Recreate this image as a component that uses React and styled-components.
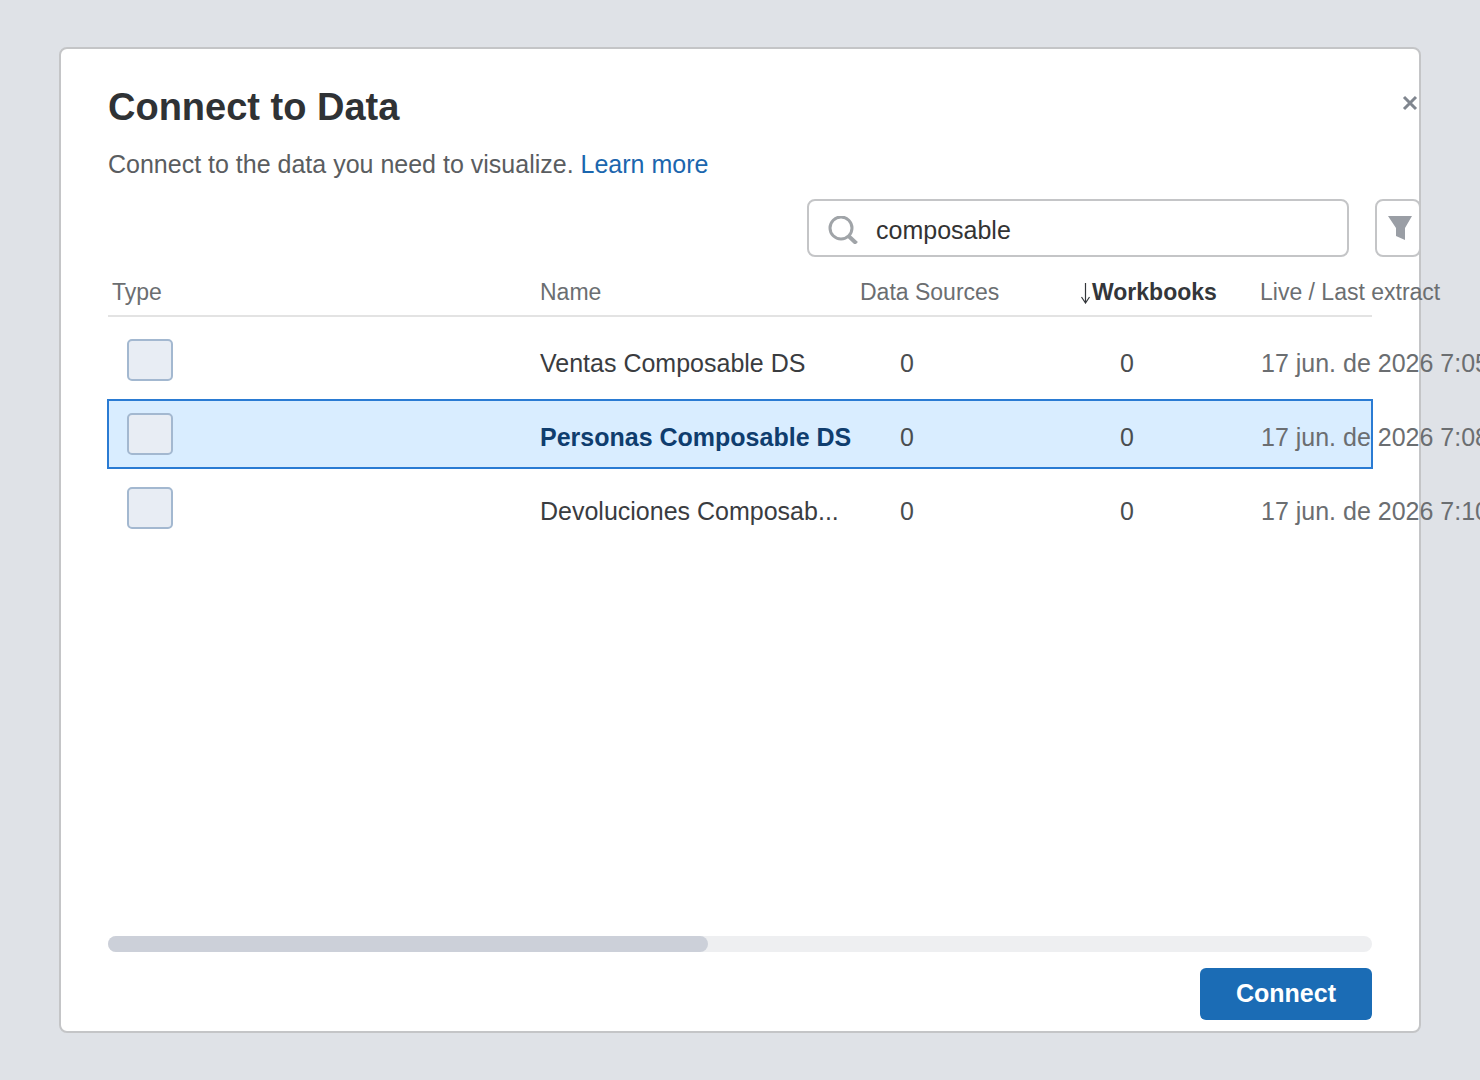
import React from 'react';
import styled, { createGlobalStyle } from 'styled-components';

const GlobalStyle = createGlobalStyle`
  html, body {
    margin: 0;
    height: 1080px;
    overflow: hidden;
    background-color: #dfe2e7;
    font-family: "Liberation Sans", Arial, sans-serif;
  }
`;

const Page = styled.div`
  padding: 47px 59px;
`;

const Dialog = styled.div`
  position: relative;
  box-sizing: border-box;
  width: 1362px;
  height: 986px;
  padding: 0 47px 11px 47px;
  display: flex;
  flex-direction: column;
  background-color: #fff;
  border: 2px solid #c4c5c7;
  border-radius: 8px;
`;

const Close = styled.button`
  position: absolute;
  top: 46px;
  right: -1px;
  width: 18px;
  height: 16px;
  padding: 0;
  display: flex;
  background: none;
  border: 0;
`;

const Title = styled.h1`
  margin: 34px 0 0;
  font-size: 38px;
  line-height: 48px;
  font-weight: 700;
  color: #2f3235;
`;

const Subtitle = styled.p`
  margin: 16px 0 0;
  font-size: 25px;
  line-height: 34px;
  color: #5a5d60;
`;

const Link = styled.a`
  color: #1b66ae;
  text-decoration: none;
`;

const Toolbar = styled.div`
  display: flex;
  justify-content: flex-end;
  gap: 26px;
  margin: 18px -49px 0 0;
`;

const Search = styled.div`
  box-sizing: border-box;
  width: 542px;
  height: 58px;
  padding: 4px 0 0 19px;
  display: flex;
  align-items: center;
  gap: 18px;
  border: 2px solid #c4c5c7;
  border-radius: 8px;
  font-size: 25px;
  color: #333;
`;

const FilterButton = styled.div`
  box-sizing: border-box;
  width: 46px;
  height: 58px;
  padding: 15px 0 0 11px;
  border: 2px solid #c4c5c7;
  border-radius: 8px;
`;

const columns = '432px 320px 220px 180px 112px';

const Header = styled.div`
  box-sizing: border-box;
  display: grid;
  grid-template-columns: ${columns};
  height: 60px;
  padding-top: 13px;
  align-items: center;
  border-bottom: 2px solid #e3e3e3;
  font-size: 23px;
  color: #6b6e71;
  white-space: nowrap;
`;

const HeadCell = styled.div`
  display: flex;
  align-items: center;
  padding-left: ${(props) => props.$inset || 0}px;
  font-weight: ${(props) => (props.$sorted ? 700 : 400)};
  color: ${(props) => (props.$sorted ? '#33363a' : 'inherit')};
`;

const Rows = styled.div`
  display: flex;
  flex-direction: column;
  gap: 6px;
  margin-top: 9px;
`;

const Row = styled.div`
  box-sizing: border-box;
  display: grid;
  grid-template-columns: ${columns};
  height: 68px;
  align-items: center;
  font-size: 25px;
  color: #3a3c3f;
  white-space: nowrap;
  outline: ${(props) => (props.$selected ? '2px solid #2a7bd3' : 'none')};
  outline-offset: -1px;
  background-color: ${(props) => (props.$selected ? '#d9edff' : 'transparent')};
`;

const Swatch = styled.div`
  box-sizing: border-box;
  width: 46px;
  height: 42px;
  margin-left: 19px;
  background-color: #e8edf4;
  border: 2px solid #a3b8d0;
  border-radius: 5px;
`;

const Name = styled.div`
  padding-top: 7px;
  font-weight: ${(props) => (props.$selected ? 700 : 400)};
  color: ${(props) => (props.$selected ? '#0f3d6e' : 'inherit')};
`;

const Count = styled.div`
  padding: 7px 0 0 40px;
  color: #4a4d50;
`;

const DateCell = styled.div`
  padding: 7px 0 0 1px;
  color: #6b6e71;
`;

const Spacer = styled.div`
  flex: 1;
`;

const Track = styled.div`
  height: 16px;
  background-color: #eeeff1;
  border-radius: 8px;
`;

const Thumb = styled.div`
  width: 600px;
  height: 16px;
  background-color: #ccd0d9;
  border-radius: 8px;
`;

const Footer = styled.div`
  display: flex;
  justify-content: flex-end;
  margin-top: 16px;
`;

const Connect = styled.button`
  width: 172px;
  height: 52px;
  padding: 0 0 2px;
  background-color: #1b6cb5;
  border: 0;
  border-radius: 6px;
  font-family: inherit;
  font-size: 25px;
  font-weight: 700;
  color: #fff;
`;

const data = [
    { name: 'Ventas Composable DS', date: '17 jun. de 2026 7:05 p. m.' },
    { name: 'Personas Composable DS', date: '17 jun. de 2026 7:08 p. m.', selected: true },
    { name: 'Devoluciones Composab...', date: '17 jun. de 2026 7:10 p. m.' },
];

const App = () => {
    return (
        <Page>
            <GlobalStyle />
            <Dialog>
                <Close aria-label="Close">
                    <svg width="16" height="16" viewBox="0 0 16 16">
                        <path d="M2 2L14 14M14 2L2 14" stroke="#80868f" strokeWidth="3" fill="none" />
                    </svg>
                </Close>
                <Title>Connect to Data</Title>
                <Subtitle>
                    Connect to the data you need to visualize. <Link href="#">Learn more</Link>
                </Subtitle>
                <Toolbar>
                    <Search>
                        <svg width="30" height="28" viewBox="0 0 30 28">
                            <circle cx="13" cy="12" r="11" stroke="#a0a4a8" strokeWidth="3" fill="none" />
                            <path d="M20.5 20L28.5 27.5" stroke="#a0a4a8" strokeWidth="4" fill="none" />
                        </svg>
                        composable
                    </Search>
                    <FilterButton>
                        <svg width="24" height="24" viewBox="0 0 24 24">
                            <path d="M0 0H24L17 12V24L8 20V12Z" fill="#9a9ea5" />
                        </svg>
                    </FilterButton>
                </Toolbar>
                <Header>
                    <HeadCell $inset={4}>Type</HeadCell>
                    <HeadCell>Name</HeadCell>
                    <HeadCell>Data Sources</HeadCell>
                    <HeadCell $sorted>
                        <svg width="12" height="22" viewBox="0 0 12 22">
                            <path d="M5.5 1V20M1.5 15L5.5 21L9.5 15" stroke="#33363a" strokeWidth="1.2" fill="none" />
                        </svg>
                        Workbooks
                    </HeadCell>
                    <HeadCell>Live / Last extract</HeadCell>
                </Header>
                <Rows>
                    {data.map((row, i) => {
                        return (
                            <Row key={i} $selected={row.selected}>
                                <Swatch />
                                <Name $selected={row.selected}>{row.name}</Name>
                                <Count>0</Count>
                                <Count>0</Count>
                                <DateCell>{row.date}</DateCell>
                            </Row>
                        );
                    })}
                </Rows>
                <Spacer />
                <Track>
                    <Thumb />
                </Track>
                <Footer>
                    <Connect>Connect</Connect>
                </Footer>
            </Dialog>
        </Page>
    );
};

export default App;
